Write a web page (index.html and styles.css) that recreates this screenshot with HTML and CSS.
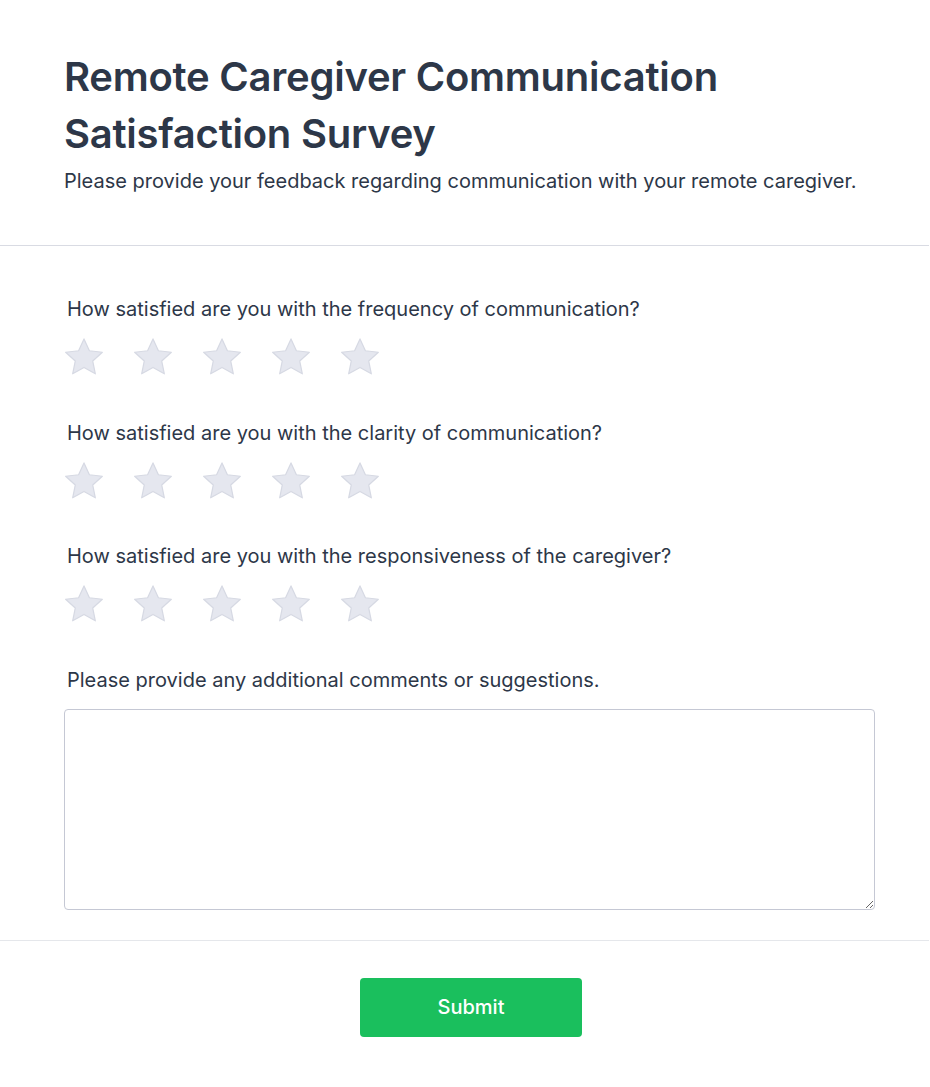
FILE: index.html
```html
<!DOCTYPE html>
<html lang="en">
<head>
<meta charset="utf-8">
<title>Remote Caregiver Communication Satisfaction Survey</title>
<link rel="stylesheet" href="styles.css">
</head>
<body>
<div class="survey">
  <header class="header">
    <h1 class="title">Remote Caregiver Communication Satisfaction Survey</h1>
    <p class="subtitle">Please provide your feedback regarding communication with your remote caregiver.</p>
  </header>
  <main class="content">
    <div class="question">
      <label class="q-label">How satisfied are you with the frequency of communication?</label>
      <div class="stars">
        <svg class="star" viewBox="0 0 40 40"><path d="M20 1.9L25.41 13.76 38.36 15.24 28.75 24.04 31.34 36.81 20 30.4 8.66 36.81 11.25 24.04 1.64 15.24 14.59 13.76z"/></svg>
        <svg class="star" viewBox="0 0 40 40"><path d="M20 1.9L25.41 13.76 38.36 15.24 28.75 24.04 31.34 36.81 20 30.4 8.66 36.81 11.25 24.04 1.64 15.24 14.59 13.76z"/></svg>
        <svg class="star" viewBox="0 0 40 40"><path d="M20 1.9L25.41 13.76 38.36 15.24 28.75 24.04 31.34 36.81 20 30.4 8.66 36.81 11.25 24.04 1.64 15.24 14.59 13.76z"/></svg>
        <svg class="star" viewBox="0 0 40 40"><path d="M20 1.9L25.41 13.76 38.36 15.24 28.75 24.04 31.34 36.81 20 30.4 8.66 36.81 11.25 24.04 1.64 15.24 14.59 13.76z"/></svg>
        <svg class="star" viewBox="0 0 40 40"><path d="M20 1.9L25.41 13.76 38.36 15.24 28.75 24.04 31.34 36.81 20 30.4 8.66 36.81 11.25 24.04 1.64 15.24 14.59 13.76z"/></svg>
      </div>
    </div>
    <div class="question">
      <label class="q-label">How satisfied are you with the clarity of communication?</label>
      <div class="stars">
        <svg class="star" viewBox="0 0 40 40"><path d="M20 1.9L25.41 13.76 38.36 15.24 28.75 24.04 31.34 36.81 20 30.4 8.66 36.81 11.25 24.04 1.64 15.24 14.59 13.76z"/></svg>
        <svg class="star" viewBox="0 0 40 40"><path d="M20 1.9L25.41 13.76 38.36 15.24 28.75 24.04 31.34 36.81 20 30.4 8.66 36.81 11.25 24.04 1.64 15.24 14.59 13.76z"/></svg>
        <svg class="star" viewBox="0 0 40 40"><path d="M20 1.9L25.41 13.76 38.36 15.24 28.75 24.04 31.34 36.81 20 30.4 8.66 36.81 11.25 24.04 1.64 15.24 14.59 13.76z"/></svg>
        <svg class="star" viewBox="0 0 40 40"><path d="M20 1.9L25.41 13.76 38.36 15.24 28.75 24.04 31.34 36.81 20 30.4 8.66 36.81 11.25 24.04 1.64 15.24 14.59 13.76z"/></svg>
        <svg class="star" viewBox="0 0 40 40"><path d="M20 1.9L25.41 13.76 38.36 15.24 28.75 24.04 31.34 36.81 20 30.4 8.66 36.81 11.25 24.04 1.64 15.24 14.59 13.76z"/></svg>
      </div>
    </div>
    <div class="question">
      <label class="q-label">How satisfied are you with the responsiveness of the caregiver?</label>
      <div class="stars">
        <svg class="star" viewBox="0 0 40 40"><path d="M20 1.9L25.41 13.76 38.36 15.24 28.75 24.04 31.34 36.81 20 30.4 8.66 36.81 11.25 24.04 1.64 15.24 14.59 13.76z"/></svg>
        <svg class="star" viewBox="0 0 40 40"><path d="M20 1.9L25.41 13.76 38.36 15.24 28.75 24.04 31.34 36.81 20 30.4 8.66 36.81 11.25 24.04 1.64 15.24 14.59 13.76z"/></svg>
        <svg class="star" viewBox="0 0 40 40"><path d="M20 1.9L25.41 13.76 38.36 15.24 28.75 24.04 31.34 36.81 20 30.4 8.66 36.81 11.25 24.04 1.64 15.24 14.59 13.76z"/></svg>
        <svg class="star" viewBox="0 0 40 40"><path d="M20 1.9L25.41 13.76 38.36 15.24 28.75 24.04 31.34 36.81 20 30.4 8.66 36.81 11.25 24.04 1.64 15.24 14.59 13.76z"/></svg>
        <svg class="star" viewBox="0 0 40 40"><path d="M20 1.9L25.41 13.76 38.36 15.24 28.75 24.04 31.34 36.81 20 30.4 8.66 36.81 11.25 24.04 1.64 15.24 14.59 13.76z"/></svg>
      </div>
    </div>
    <div class="comments">
      <label class="q-label">Please provide any additional comments or suggestions.</label>
      <textarea class="textarea"></textarea>
    </div>
  </main>
  <footer class="footer">
    <button class="submit" type="button">Submit</button>
  </footer>
</div>
</body>
</html>
```
FILE: styles.css
```css
* { box-sizing: border-box; }
html, body { margin: 0; padding: 0; background: #ffffff; }
body {
  font-family: Inter, "Noto Sans", sans-serif;
  color: #2d3748;
}
.survey { width: 929px; }
.header {
  padding: 48px 64px 50px;
  border-bottom: 1px solid #d9dbe3;
}
.title {
  margin: 0;
  font-size: 40px;
  line-height: 57px;
  font-weight: 600;
  letter-spacing: -0.25px;
  color: #2d3748;
  max-width: 720px;
}
.subtitle {
  margin: 5px 0 0;
  font-size: 20px;
  line-height: 28px;
  color: #2d3748;
}
.content {
  padding: 50px 54px 30px 64px;
  border-bottom: 1px solid #e5e7eb;
}
.question { margin-bottom: 42.5px; }
.q-label {
  display: block;
  padding-left: 3px;
  font-size: 20px;
  line-height: 27px;
  color: #2d3748;
}
.stars {
  display: flex;
  gap: 29px;
  margin-top: 14px;
}
.star {
  width: 40px;
  height: 40px;
  display: block;
}
.star path {
  fill: #e5e7ef;
  stroke: #d6d9e3;
  stroke-width: 1.2;
  stroke-linejoin: round;
}
.comments .q-label { margin-bottom: 15px; }
.textarea {
  display: block;
  width: 811px;
  height: 201px;
  border: 1px solid #c5c8d4;
  border-radius: 4px;
  resize: vertical;
  font-family: inherit;
  font-size: 16px;
}
.footer {
  display: flex;
  justify-content: center;
  padding: 37px 0 50px 13px;
}
.submit {
  width: 222px;
  height: 59px;
  border: none;
  border-radius: 4px;
  background: #1abf5d;
  color: #ffffff;
  font-family: inherit;
  font-size: 20px;
  font-weight: 500;
}
```
